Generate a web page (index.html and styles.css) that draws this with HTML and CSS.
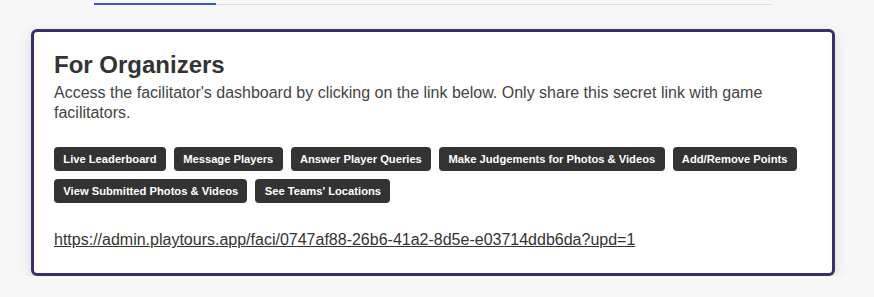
FILE: index.html
```html
<!DOCTYPE html>
<html lang="en">
<head>
    <meta charset="UTF-8">
    <meta name="viewport" content="width=device-width, initial-scale=1.0">
    <title>For Organizers</title>
    <link rel="stylesheet" href="styles.css">
</head>
<body>
    <div class="tabs">
        <div class="tab-active"></div>
    </div>

    <div class="card">
        <h2 class="card-title">For Organizers</h2>
        <p class="card-text">Access the facilitator's dashboard by clicking on the link below. Only share this secret link with game facilitators.</p>

        <div class="features">
            <span class="feature">Live Leaderboard</span>
            <span class="feature">Message Players</span>
            <span class="feature">Answer Player Queries</span>
            <span class="feature">Make Judgements for Photos &amp; Videos</span>
            <span class="feature">Add/Remove Points</span>
            <span class="feature">View Submitted Photos &amp; Videos</span>
            <span class="feature">See Teams' Locations</span>
        </div>

        <a class="secret-link" href="#">https://admin.playtours.app/faci/0747af88-26b6-41a2-8d5e-e03714ddb6da?upd=1</a>
    </div>
</body>
</html>
```

FILE: styles.css
```css
:root {
    --background-color: #f7f7f7;
    --text-color: #333;
    --card-border: #3b2f6b;
    --tab-line: #dddddd;
    --tab-active: #3f56d1;
    --chip-bg: #333;
}

* {
    margin: 0;
    padding: 0;
    box-sizing: border-box;
    font-family: Arial, 'Liberation Sans', sans-serif;
}

body {
    background-color: var(--background-color);
    color: var(--text-color);
    padding-top: 3px;
}

.tabs {
    margin-left: 94px;
    width: 677px;
    height: 2px;
    border-bottom: 1px solid var(--tab-line);
    display: flex;
}

.tab-active {
    width: 122px;
    height: 2px;
    background-color: var(--tab-active);
}

.card {
    margin: 24px 0 0 31px;
    width: 804px;
    background-color: #fff;
    border: 3px solid var(--card-border);
    border-radius: 6px;
    padding: 19px 20px 23px;
    box-shadow: 0 4px 14px rgba(0, 0, 0, 0.12);
}

.card-title {
    font-size: 24px;
    font-weight: bold;
    line-height: 28px;
    color: var(--text-color);
    margin-bottom: 4px;
}

.card-text {
    font-size: 16px;
    line-height: 19.6px;
    color: #444;
    margin-bottom: 25px;
}

.features {
    display: flex;
    flex-wrap: wrap;
    gap: 8px;
    margin-bottom: 27px;
}

.feature {
    background-color: var(--chip-bg);
    color: #fff;
    font-size: 11.2px;
    font-weight: bold;
    line-height: 14px;
    padding: 5px 9.3px;
    border-radius: 4px;
}

.secret-link {
    display: block;
    font-size: 16px;
    line-height: 19.6px;
    color: var(--text-color);
    text-decoration: underline;
}
```
